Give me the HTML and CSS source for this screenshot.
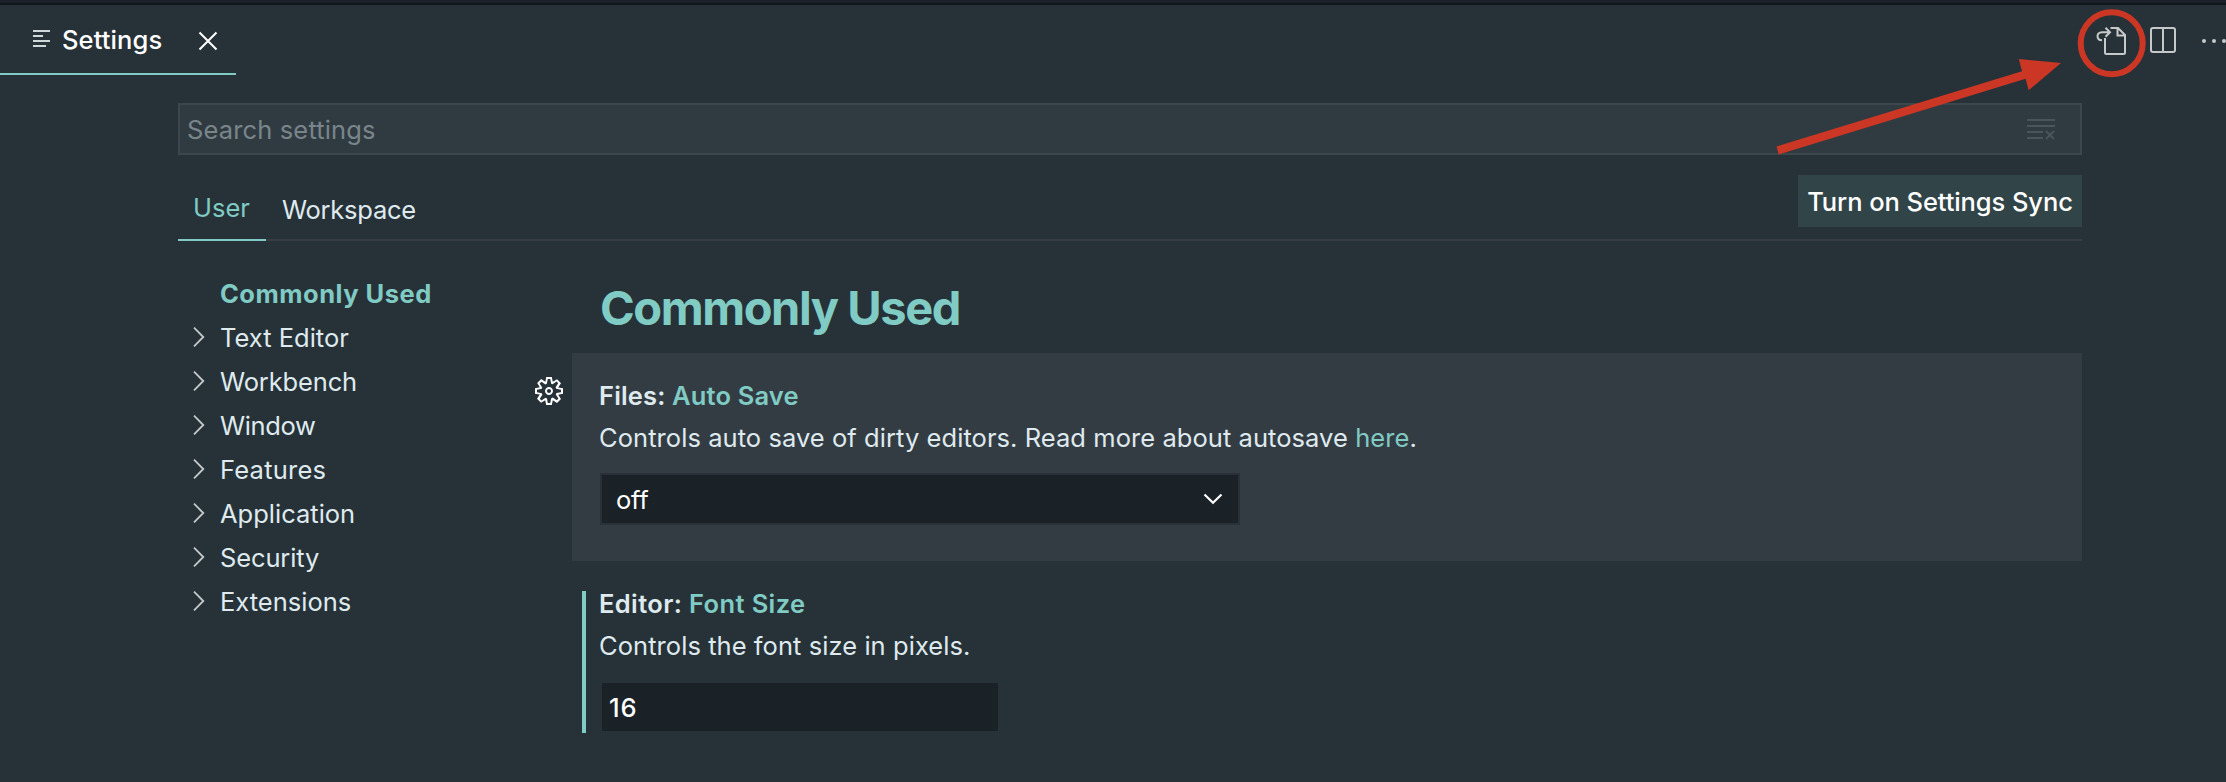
FILE: index.html
```
<!DOCTYPE html>
<html lang="en">
<head>
<meta charset="utf-8">
<title>Settings</title>
<link rel="stylesheet" href="styles.css">
</head>
<body>
<div class="window">
  <header class="tabbar">
    <div class="tab">
      <svg class="tab-icon" width="18" height="20" viewBox="0 0 18 20"><path d="M0 2h17M0 7h10M0 12h17M0 17h13" stroke="#cfd8d9" stroke-width="2"/></svg>
      <span class="tab-title">Settings</span>
      <svg class="tab-close" width="20" height="20" viewBox="0 0 20 20"><path d="M1.500 1.500l17 17M18.500 1.500l-17 17" stroke="#fff" stroke-width="2"/></svg>
    </div>
    <div class="actions">
      <svg class="open-json" width="32" height="32" viewBox="0 0 32 32" fill="none" stroke="#c5c9ca" stroke-width="2"><path d="M14.500 2H22l7 7v17.500q0 1.500-1.500 1.500h-17Q9 28 9 26.500V12M21.500 2v7.500H29"/><path d="M9.500 1.700l4.500 4.500-4.500 4.500M14 6.200H6q-4.500.3-4.500 4 0 3.800 4.500 4.100"/></svg>
      <svg width="26" height="26" viewBox="0 0 26 26" fill="none" stroke="#c5c9ca" stroke-width="2"><rect x="1" y="1" width="24" height="24" rx="2"/><path d="M13 1v24"/></svg>
      <svg class="more" width="24" height="6" viewBox="0 0 24 6" fill="#c5c9ca"><circle cx="2" cy="3" r="2"/><circle cx="12" cy="3" r="2"/><circle cx="22" cy="3" r="2"/></svg>
    </div>
  </header>

  <main class="settings">
    <div class="search">
      <span class="search-text">Search settings</span>
      <svg width="28" height="22" viewBox="0 0 28 22" fill="none" stroke="#4a5459" stroke-width="2"><path d="M0 2h28M0 8h28M0 14h16M0 20h16M19 13l8 8M27 13l-8 8"/></svg>
    </div>

    <div class="scopes">
      <div class="scope scope-active">User</div>
      <div class="scope scope-workspace">Workspace</div>
      <button class="sync">Turn on Settings Sync</button>
    </div>

    <div class="body">
      <nav class="tree">
        <div class="node node-active"><span class="chev"></span><span class="n-common">Commonly Used</span></div>
        <div class="node"><svg class="chev" viewBox="0 0 12 20"><path d="M1 .7l9.300 9.300L1 19.300"/></svg><span>Text Editor</span></div>
        <div class="node"><svg class="chev" viewBox="0 0 12 20"><path d="M1 .7l9.300 9.300L1 19.300"/></svg><span class="tight">Workbench</span></div>
        <div class="node"><svg class="chev" viewBox="0 0 12 20"><path d="M1 .7l9.300 9.300L1 19.300"/></svg><span class="tighter">Window</span></div>
        <div class="node"><svg class="chev" viewBox="0 0 12 20"><path d="M1 .7l9.300 9.300L1 19.300"/></svg><span class="loose">Features</span></div>
        <div class="node"><svg class="chev" viewBox="0 0 12 20"><path d="M1 .7l9.300 9.300L1 19.300"/></svg><span>Application</span></div>
        <div class="node"><svg class="chev" viewBox="0 0 12 20"><path d="M1 .7l9.300 9.300L1 19.300"/></svg><span class="tight">Security</span></div>
        <div class="node"><svg class="chev" viewBox="0 0 12 20"><path d="M1 .7l9.300 9.300L1 19.300"/></svg><span>Extensions</span></div>
      </nav>

      <section class="list">
        <h1 class="heading">Commonly Used</h1>
        <div class="row">
          <svg class="gear" width="32" height="32" viewBox="0 0 16 16" fill="#fff"><path fill-rule="evenodd" d="M9.100 4.400L8.600 2H7.400l-.5 2.400-.7.3-2-1.300-.9.8 1.300 2-.2.7-2.400.5v1.200l2.400.5.3.8-1.300 2 .8.8 2-1.300.8.3.4 2.300h1.200l.5-2.400.8-.3 2 1.300.8-.8-1.300-2 .3-.8 2.300-.4V7.400l-2.400-.5-.3-.8 1.300-2-.8-.8-2 1.300-.7-.2zM9.400 1l.5 2.400L12 2.100l2 2-1.400 2.100 2.400.4v2.800l-2.400.5L14 12l-2 2-2.100-1.400-.5 2.400H6.600l-.5-2.400L4 13.900l-2-2 1.400-2.100L1 9.400V6.600l2.400-.5L2.100 4l2-2 2.100 1.400.4-2.400h2.800zm.6 7c0 1.100-.9 2-2 2s-2-.9-2-2 .9-2 2-2 2 .9 2 2zM8 9c.6 0 1-.4 1-1s-.4-1-1-1-1 .4-1 1 .4 1 1 1z"/></svg>
          <div class="item item-focused">
            <h2 class="title">Files: <span class="key">Auto Save</span></h2>
            <p class="desc">Controls auto save of dirty editors. Read more about autosave <a class="link">here</a>.</p>
            <div class="select">
              <span class="select-value">off</span>
              <svg width="20" height="12" viewBox="0 0 20 12" fill="none" stroke="#fff" stroke-width="2.200"><path d="M1.500 1.500L10 9.700l8.500-8.200"/></svg>
            </div>
          </div>
        </div>
        <div class="row">
          <span class="gear"></span>
          <div class="item item-modified">
            <h2 class="title title-wide">Editor: <span class="key">Font Size</span></h2>
            <p class="desc">Controls the font size in pixels.</p>
            <div class="number">16</div>
          </div>
        </div>
      </section>
    </div>
  </main>

  <svg class="annotation" width="406" height="160" viewBox="1770 0 406 160"><circle cx="2111.700" cy="43.300" r="31" fill="none" stroke="#cb3625" stroke-width="6"/><path fill="#cb3625" d="M1776.600 146.500L2022 71.300l-3.200-12.300L2061 63l-32.400 27.300-3-11.600L1778.600 154.500z"/></svg>
</div>
</body>
</html>
```
FILE: styles.css
```
* {
  box-sizing: border-box;
  margin: 0;
}

body {
  background: #273238;
  color: #dfeaee;
  font: 400 25.5px/36px Inter, "Liberation Sans", sans-serif;
  white-space: nowrap;
}

.window {
  position: relative;
  height: 782px;
  overflow: hidden;
  border-top: 3px solid #1a2129;
}

svg {
  display: block;
  flex: none;
}

/* Editor tab bar */
.tabbar {
  display: flex;
  justify-content: space-between;
  height: 72px;
  border-top: 2px solid #10161c;
}

.tab {
  display: flex;
  align-items: center;
  width: 236px;
  padding-left: 33px;
  border-bottom: 2px solid #80cbc4;
  color: #fff;
}

.tab-icon {
  margin-right: 11px;
}

.tab-title {
  width: 136px;
  padding-top: 2px;
  font-weight: 500;
  letter-spacing: 0.12px;
}

.tab-close {
  margin-top: 4px;
}

.actions {
  display: flex;
  align-items: flex-start;
  gap: 22px;
  width: 130px;
  padding-top: 22px;
}

.open-json {
  margin-top: -1px;
}

.more {
  margin: 11px 0 0 4px;
}

/* Search and scope tabs */
.settings {
  padding: 28px 144px 0 178px;
}

.search {
  display: flex;
  align-items: center;
  justify-content: space-between;
  height: 52px;
  padding: 0 25px 0 7px;
  border: 2px solid #3c474c;
  background: #303b41;
  color: #79858a;
}

.search-text {
  padding-top: 2px;
  letter-spacing: 0.14px;
}

.scopes {
  display: flex;
  height: 86px;
  border-bottom: 2px solid #373d42;
}

.scope {
  height: 86px;
  padding-top: 35px;
}

.scope-active {
  width: 88px;
  padding-left: 15px;
  border-bottom: 2px solid #80cbc4;
  color: #80cbc4;
}

.scope-workspace {
  padding: 37px 0 0 16px;
  letter-spacing: -0.25px;
}

.sync {
  width: 284px;
  height: 52px;
  margin: 20px 0 0 auto;
  padding: 2px 0 0;
  border: 0;
  background: #314448;
  color: #fff;
  font: inherit;
  font-weight: 500;
  letter-spacing: -0.08px;
}

/* Category tree */
.body {
  display: flex;
}

.tree {
  width: 355px;
  padding: 31px 0 0 15px;
}

.node {
  display: flex;
  align-items: center;
  height: 44px;
}

.chev {
  width: 12px;
  height: 20px;
  margin: -2px 15px 0 0;
  fill: none;
  stroke: #c5c9ca;
  stroke-width: 1.8;
}

.node-active {
  color: #80cbc4;
  font-weight: 700;
}

.n-common {
  letter-spacing: 0.5px;
}

.tight {
  letter-spacing: -0.14px;
}

.tighter {
  letter-spacing: -0.36px;
}

.loose {
  letter-spacing: 0.22px;
}

/* Settings list */
.list {
  flex: 1;
}

.heading {
  height: 112px;
  padding: 38px 0 0 67px;
  color: #80cbc4;
  font-size: 47px;
  font-weight: 700;
  line-height: 58px;
  letter-spacing: -1.42px;
}

.row {
  display: flex;
}

.gear {
  width: 32px;
  margin: 22px 7px 0 0;
}

.item {
  flex: 1;
  padding: 25px 0 0 27px;
}

.item-focused {
  height: 208px;
  background: #343c43;
}

.title {
  font-size: 25.5px;
  font-weight: 600;
  letter-spacing: 0.15px;
}

.title-wide {
  letter-spacing: 0.38px;
}

.key,
.link {
  color: #80cbc4;
}

.desc {
  margin-top: 6px;
  letter-spacing: 0.06px;
}

.select {
  display: flex;
  align-items: center;
  justify-content: space-between;
  width: 640px;
  height: 52px;
  margin: 17px 0 0 1px;
  padding: 0 15px 0 14px;
  border: 2px solid #2a3038;
  background: #1a2228;
  color: #fff;
}

.select-value {
  padding-top: 2px;
  letter-spacing: -0.3px;
}

.item-modified {
  flex: none;
  height: 142px;
  margin: 30px 0 0 10px;
  padding: 0 0 0 13px;
  border-left: 4px solid #80cbc4;
}

.item-modified .title {
  margin-top: -5px;
}

.number {
  width: 396px;
  height: 48px;
  margin: 19px 0 0 3px;
  padding: 7px;
  background: #1a2228;
  color: #fff;
  font-weight: 500;
  letter-spacing: 1px;
}

/* Marker drawn over the editor actions */
.annotation {
  position: absolute;
  top: -3px;
  left: 1770px;
}
```
